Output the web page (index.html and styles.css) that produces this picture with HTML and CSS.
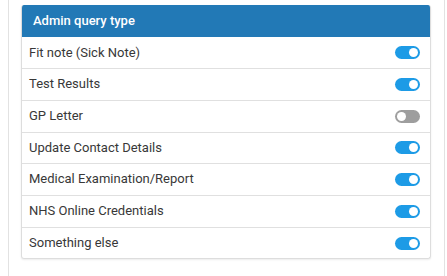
FILE: index.html
```html
<!DOCTYPE html>
<html>

<head>
    <title>Admin query type</title>
    <link rel="stylesheet" href="styles.css">
</head>

<body>
    <div class="panel">
        <div class="card">
            <div class="card-header">Admin query type</div>
            <div class="row">
                <span class="label">Fit note (Sick Note)</span>
                <span class="switch on"></span>
            </div>
            <div class="row">
                <span class="label">Test Results</span>
                <span class="switch on"></span>
            </div>
            <div class="row">
                <span class="label">GP Letter</span>
                <span class="switch"></span>
            </div>
            <div class="row">
                <span class="label">Update Contact Details</span>
                <span class="switch on"></span>
            </div>
            <div class="row">
                <span class="label">Medical Examination/Report</span>
                <span class="switch on"></span>
            </div>
            <div class="row">
                <span class="label">NHS Online Credentials</span>
                <span class="switch on"></span>
            </div>
            <div class="row">
                <span class="label">Something else</span>
                <span class="switch on"></span>
            </div>
        </div>
    </div>
</body>

</html>
```

FILE: styles.css
```css
html,
body {
    margin: 0;
    padding: 0;
    background-color: #ffffff;
    font-family: Roboto, "Liberation Sans", Arial, sans-serif;
}

.panel {
    margin-left: 8px;
    width: 437px;
    min-height: 276px;
    border-left: 1px solid #e2e2e2;
    border-right: 1px solid #e2e2e2;
    padding: 5px 13px 0 12px;
    box-sizing: border-box;
}

/* 卡片 */
.card {
    border: 1px solid #dddddd;
    border-top: none;
    border-radius: 3px;
    box-shadow: 0px 1px 2px rgba(0, 0, 0, 0.08);
    overflow: hidden;
}

.card-header {
    background-color: #2279b6;
    color: #ffffff;
    font-size: 13px;
    font-weight: 500;
    line-height: 16px;
    padding: 8px 12px 8px 12px;
    margin: 0 -1px;
}

.row {
    display: flex;
    align-items: center;
    justify-content: space-between;
    padding: 6px 10px 6px 7px;
    line-height: 18.7px;
    border-top: 1px solid #e0e0e0;
    font-size: 13px;
    color: #383838;
}

.card-header + .row {
    border-top: none;
    padding-top: 6.5px;
}

/* 开关 */
.switch {
    position: relative;
    width: 25px;
    height: 13px;
    border-radius: 7px;
    background-color: #9e9e9e;
}

.switch::after {
    content: '';
    position: absolute;
    top: 2px;
    left: 2px;
    width: 9px;
    height: 9px;
    border-radius: 50%;
    background-color: #ffffff;
}

.switch.on {
    background-color: #1d9be6;
}

.switch.on::after {
    left: 14px;
}
```
